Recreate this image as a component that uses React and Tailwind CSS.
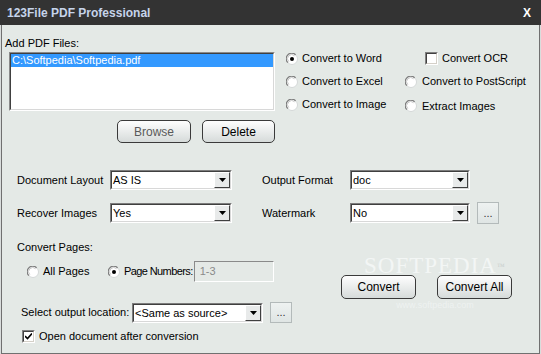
import React from 'react'

const Radio = ({ checked }) => (
  <svg width="12" height="12" viewBox="0 0 12 12" className="shrink-0">
    <circle cx="6" cy="6" r="5.5" fill="#ffffff" stroke="#d4d8d8" />
    <path d="M1.8 9.6 A5.2 5.2 0 0 1 9.6 1.8" stroke="#7c7c7c" strokeWidth="1.2" fill="none" />
    <path d="M2.8 8.6 A3.9 3.9 0 0 1 8.6 2.8" stroke="#c8c8c8" strokeWidth="1" fill="none" />
    {checked && <circle cx="6" cy="6" r="2" fill="#000000" />}
  </svg>
)

const Check = ({ checked }) => (
  <span className="flex h-[13px] w-[13px] shrink-0 border border-t-[#808080] border-l-[#808080] border-b-white border-r-white">
    <span className="flex flex-1 items-center justify-center border border-t-[#404040] border-l-[#404040] border-b-[#d4d0c8] border-r-[#d4d0c8] bg-white">
      {checked && (
        <svg width="7" height="7" viewBox="0 0 7 7">
          <path d="M0 3 L2.5 5.5 L7 0.5" stroke="#000" strokeWidth="1.6" fill="none" />
        </svg>
      )}
    </span>
  </span>
)

const Select = ({ value, className }) => (
  <div className={`flex h-[20px] border border-t-[#7c7c7c] border-l-[#7c7c7c] border-b-white border-r-white ${className}`}>
    <div className="flex flex-1 items-center border border-t-[#3f3f3f] border-l-[#3f3f3f] border-b-[#d8d8d8] border-r-[#d8d8d8] bg-white">
      <span className="flex-1 pl-[1px] pt-[1px] text-[11px] leading-none text-black">{value}</span>
      <span className="flex h-[16px] w-[16px] items-center justify-center border border-t-white border-l-white border-b-[#404040] border-r-[#404040] bg-[#e8eaea]">
        <svg width="7" height="4" viewBox="0 0 7 4">
          <path d="M0 0h7L3.5 4z" fill="#000" />
        </svg>
      </span>
    </div>
  </div>
)

const DotsButton = ({ className }) => (
  <div className={`flex w-[22px] items-end justify-center border border-[#b3baba] bg-gradient-to-b from-[#eef2f1] to-[#dfe5e4] pb-[4px] text-[11px] leading-none text-[#333] ${className}`}>
    ...
  </div>
)

const PushButton = ({ label, className }) => (
  <button
    className={`flex items-center justify-center rounded-[5px] border border-[#3a3a3a] bg-gradient-to-b from-[#fefefe] to-[#d6dbda] text-[12px] leading-none ${className}`}
  >
    {label}
  </button>
)

const Option = ({ children, type = 'radio', checked, gap = 'gap-[4px]', className = '' }) => (
  <div className={`flex h-[23px] items-center ${gap} ${className}`}>
    {type === 'radio' ? <Radio checked={checked} /> : <Check checked={checked} />}
    <span className="text-[11px] leading-none text-black">{children}</span>
  </div>
)

export default function App() {
  return (
    <div className="h-[354px] w-[541px] overflow-hidden bg-[#d9dddc] font-['Liberation_Sans',Arial,sans-serif] text-black">
      <div className="flex h-[25px] items-center justify-between bg-[#333333] pl-[7px] pr-[10px]">
        <span className="text-[12px] font-bold leading-none text-[#c6d4ea]">123File PDF Professional</span>
        <span className="text-[12px] font-bold leading-none text-white">X</span>
      </div>

      <div className="relative ml-[1px] h-[329px] w-[539px] border-x border-b border-[#707070] bg-[#e4e9e6]">
        {/* files + conversion options */}
        <div className="flex">
          <div className="flex w-[273px] flex-col">
            <span className="ml-[3px] mt-[12px] text-[11px] leading-[13px]">Add PDF Files:</span>
            <div className="ml-[7px] mt-[2px] flex h-[59px] w-[266px] border border-t-[#8a8a8a] border-l-[#8a8a8a] border-b-white border-r-white">
              <div className="flex-1 border border-t-[#404040] border-l-[#404040] border-b-[#d8d8d8] border-r-[#d8d8d8] bg-white">
                <div className="flex h-[13px] items-center bg-[#3399ff] pl-[1px] text-[11px] leading-none text-white">
                  C:\Softpedia\Softpedia.pdf
                </div>
              </div>
            </div>
            <div className="mt-[9px] flex">
              <PushButton label="Browse" className="ml-[115px] h-[23px] w-[74px] text-[#5a5a5a]" />
              <PushButton label="Delete" className="ml-[11px] h-[23px] w-[73px] text-black" />
            </div>
          </div>

          <div className="ml-[11px] flex pt-[22px]">
            <div className="flex w-[119px] flex-col">
              <Option checked>Convert to Word</Option>
              <Option>Convert to Excel</Option>
              <Option>Convert to Image</Option>
            </div>
            <div className="flex flex-col">
              <Option type="check" className="pl-[20px]">Convert OCR</Option>
              <Option gap="gap-[5px]">Convert to PostScript</Option>
              <Option gap="gap-[5px]" className="pt-[3px]">Extract Images</Option>
            </div>
          </div>
        </div>

        {/* layout / format settings */}
        <div className="mt-[27px] flex h-[20px] items-center">
          <span className="ml-[15px] w-[93px] text-[11px] leading-none">Document Layout</span>
          <Select value="AS IS" className="w-[122px]" />
          <span className="ml-[30px] w-[88px] text-[11px] leading-none">Output Format</span>
          <Select value="doc" className="w-[120px]" />
        </div>
        <div className="mt-[12px] flex h-[22px] items-center">
          <span className="ml-[15px] w-[93px] text-[11px] leading-none">Recover Images</span>
          <Select value="Yes" className="w-[122px]" />
          <span className="ml-[30px] w-[88px] text-[11px] leading-none">Watermark</span>
          <Select value="No" className="w-[120px]" />
          <DotsButton className="ml-[7px] h-[22px]" />
        </div>

        {/* pages + output */}
        <div className="flex">
          <div className="flex flex-col">
            <span className="ml-[15px] mt-[17px] text-[11px] leading-[13px]">Convert Pages:</span>
            <div className="mt-[7px] flex h-[21px] items-center">
              <div className="ml-[25px] flex w-[81px] items-center gap-[4px]">
                <Radio />
                <span className="text-[11px] leading-none">All Pages</span>
              </div>
              <div className="flex items-center gap-[4px]">
                <Radio checked />
                <span className="text-[11px] leading-none tracking-[-0.6px]">Page Numbers:</span>
              </div>
              <div className="ml-[1px] flex h-[21px] w-[80px] items-center border border-t-[#8a8a8a] border-l-[#8a8a8a] border-b-white border-r-white pl-[5px] text-[11px] leading-none text-[#8a8a8a]">
                1-3
              </div>
            </div>
            <div className="mt-[20px] flex h-[21px] items-center">
              <span className="ml-[19px] w-[111px] text-[11px] leading-none">Select output location:</span>
              <Select value="<Same as source>" className="w-[131px]" />
              <DotsButton className="ml-[7px] h-[21px]" />
            </div>
            <div className="ml-[20px] mt-[7px] flex h-[13px] items-center gap-[4px]">
              <Check checked />
              <span className="text-[11px] leading-none">Open document after conversion</span>
            </div>
          </div>

          <div className="ml-auto mr-[27px] flex gap-[21px] pt-[51px]">
            <PushButton label="Convert" className="h-[24px] w-[75px] text-black" />
            <PushButton label="Convert All" className="h-[24px] w-[75px] text-black" />
          </div>
        </div>

        {/* watermark */}
        <div className="pointer-events-none absolute left-[362px] top-[234px] flex flex-col items-center">
          <span className="font-['Liberation_Serif',serif] text-[23px] leading-[14px] tracking-[1px] text-[#f3f6f5]">
            SOFTPEDIA<sup className="text-[8px] text-[#c9cfcd]">™</sup>
          </span>
          <span className="mt-[28px] text-[9px] leading-[9px] text-[#eef2f1]">www.softpedia.com</span>
        </div>
      </div>
    </div>
  )
}
